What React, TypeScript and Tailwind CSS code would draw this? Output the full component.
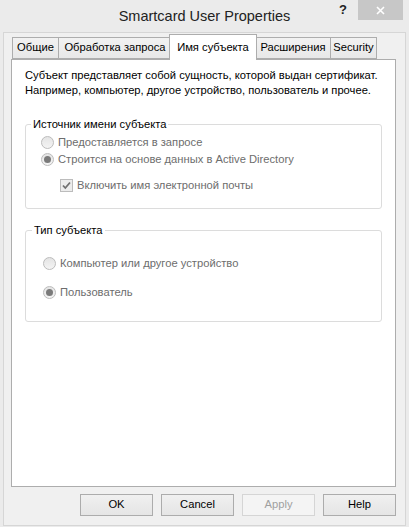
import React from "react";

function Radio({ checked }: { checked?: boolean }) {
  return (
    <span className="relative inline-flex w-[13px] h-[13px] rounded-full border border-[#bcbcbc] bg-[linear-gradient(180deg,#e4e4e4,#f4f4f4)] items-center justify-center shrink-0">
      {checked && <span className="w-[7px] h-[7px] rounded-full bg-[#7a7a7a]" />}
    </span>
  );
}

function Check() {
  return (
    <span className="inline-flex w-[13px] h-[13px] border border-[#bcbcbc] bg-[#ececec] items-center justify-center shrink-0">
      <svg width="11" height="11" viewBox="0 0 11 11">
        <path d="M2 5.5 L4.3 8 L9 2.5" fill="none" stroke="#707070" strokeWidth="1.8" />
      </svg>
    </span>
  );
}

export default function App() {
  const tabBase =
    "h-[22px] bg-[linear-gradient(180deg,#f2f2f2,#e8e8e8)] border border-[#adadad] flex items-center justify-center text-black whitespace-nowrap shrink-0";
  return (
    <div className="w-[409px] h-[532px] bg-white font-['Liberation_Sans',Arial,sans-serif] text-[11.2px] leading-none">
      <div className="w-[409px] h-[527px] bg-[#ebebeb] flex flex-col">
        <div className="h-[32px] relative flex items-center justify-center shrink-0">
          <span className="text-[14.5px] text-[#222] pt-[1px]">Smartcard User Properties</span>
          <span className="absolute left-[339px] top-[3px] text-[13px] font-bold text-[#222]">?</span>
          <div className="absolute left-[358px] top-0 w-[45px] h-[20px] bg-[#c7c7c7] flex items-center justify-center">
            <svg width="9" height="9" viewBox="0 0 9 9">
              <path d="M1 1 L8 8 M8 1 L1 8" stroke="#fff" strokeWidth="1.6" />
            </svg>
          </div>
        </div>
        <div className="h-[494px] mx-[3px] border border-[#d6d6d6] bg-[#f0f0f0] px-[7px] flex flex-col">
          <div className="flex items-end h-[26px] pl-px">
            <div className={`${tabBase} w-[47px]`}>Общие</div>
            <div className={`${tabBase} w-[114px] -ml-px`}>Обработка запроса</div>
            <div className="relative z-10 h-[26px] w-[88px] -ml-[3px] -mr-[2px] mb-[-1px] bg-white border border-b-0 border-[#adadad] flex items-center justify-center text-black whitespace-nowrap shrink-0">
              Имя субъекта
            </div>
            <div className={`${tabBase} w-[76px]`}>Расширения</div>
            <div className={`${tabBase} w-[47px] -ml-px`}>Security</div>
          </div>
          <div className="h-[428px] w-[385px] bg-white border border-[#adadad] px-[13px] pt-[8px]">
            <p className="leading-[15px] text-black whitespace-nowrap">
              Субъект представляет собой сущность, которой выдан сертификат.
              <br />
              Например, компьютер, другое устройство, пользователь и прочее.
            </p>
            <fieldset className="mt-[19px] border border-[#dcdcdc] rounded-[3px] h-[92px] px-0">
              <legend className="ml-[5px] px-[2px] text-black leading-[14px]">Источник имени субъекта</legend>
              <div className="pl-[15px]">
                <div className="flex items-center gap-[4px] mt-[5px] text-[#6d6d6d]">
                  <Radio /> <span>Предоставляется в запросе</span>
                </div>
                <div className="flex items-center gap-[4px] mt-[4px] text-[#6d6d6d]">
                  <Radio checked /> <span>Строится на основе данных в Active Directory</span>
                </div>
                <div className="flex items-center gap-[4px] mt-[13px] ml-[19px] text-[#6d6d6d]">
                  <Check /> <span>Включить имя электронной почты</span>
                </div>
              </div>
            </fieldset>
            <fieldset className="mt-[14px] border border-[#dcdcdc] rounded-[3px] h-[99px] px-0">
              <legend className="ml-[6px] px-[2px] text-black leading-[14px]">Тип субъекта</legend>
              <div className="pl-[17px]">
                <div className="flex items-center gap-[4px] mt-[20px] text-[#6d6d6d]">
                  <Radio /> <span>Компьютер или другое устройство</span>
                </div>
                <div className="flex items-center gap-[4px] mt-[16px] text-[#6d6d6d]">
                  <Radio checked /> <span>Пользователь</span>
                </div>
              </div>
            </fieldset>
          </div>
          <div className="flex justify-end gap-[8px] mt-[7px] pr-[2px]">
            <div className="w-[73px] h-[22px] border border-[#acacac] bg-[linear-gradient(180deg,#f0f0f0,#e5e5e5)] text-black flex items-center justify-center">OK</div>
            <div className="w-[73px] h-[22px] border border-[#acacac] bg-[linear-gradient(180deg,#f0f0f0,#e5e5e5)] text-black flex items-center justify-center">Cancel</div>
            <div className="w-[73px] h-[22px] border border-[#d5d5d5] bg-[#f4f4f4] text-[#a0a0a0] flex items-center justify-center">Apply</div>
            <div className="w-[73px] h-[22px] border border-[#acacac] bg-[linear-gradient(180deg,#f0f0f0,#e5e5e5)] text-black flex items-center justify-center">Help</div>
          </div>
        </div>
      </div>
    </div>
  );
}
